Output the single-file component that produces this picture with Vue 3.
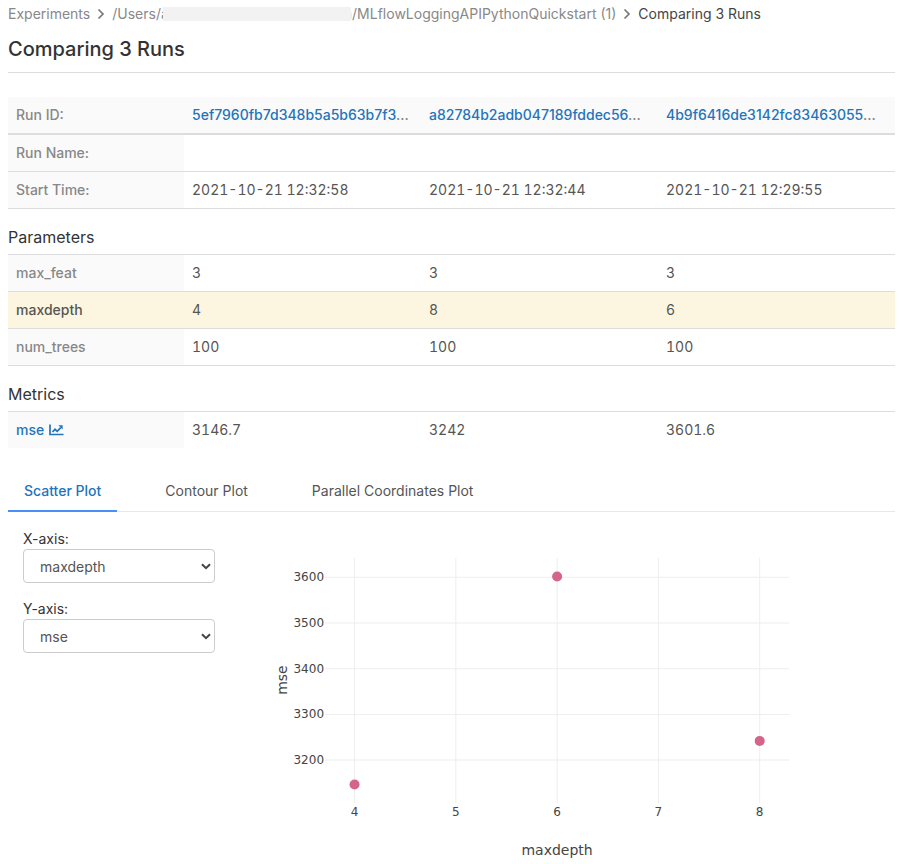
<script setup>
import { ref, computed } from 'vue'

const runs = [
  { id: '5ef7960fb7d348b5a5b63b7f3', start: '2021-10-21 12:32:58' },
  { id: 'a82784b2adb047189fddec56', start: '2021-10-21 12:32:44' },
  { id: '4b9f6416de3142fc83463055', start: '2021-10-21 12:29:55' }
]

const params = [
  { name: 'max_feat', values: [3, 3, 3] },
  { name: 'maxdepth', values: [4, 8, 6] },
  { name: 'num_trees', values: [100, 100, 100] }
]

const mse = [3146.7, 3242, 3601.6]

const differs = (row) => new Set(row.values).size > 1

const tabs = ['Scatter Plot', 'Contour Plot', 'Parallel Coordinates Plot']
const activeTab = ref(tabs[0])

const xAxis = ref('maxdepth')
const yAxis = ref('mse')

// Data space to drawing space
const scaleX = (v) => 109.5 + (v - 4) * 101.25
const scaleY = (v) => 236 - (v - 3200) * 0.4568

const xTicks = [4, 5, 6, 7, 8]
const yTicks = [3200, 3300, 3400, 3500, 3600]

const points = computed(() =>
  params[1].values.map((depth, i) => ({ x: scaleX(depth), y: scaleY(mse[i]) }))
)
</script>

<template>
  <main class="page">
    <nav class="breadcrumb" aria-label="Breadcrumb">
      <a href="#">Experiments</a>
      <svg class="chevron" viewBox="0 0 8 12"><path d="M1.5 1.5 6 6 1.5 10.5" /></svg>
      <a href="#" class="path"><span>/Users/a</span><span class="redacted"></span><span>m/MLflowLoggingAPIPythonQuickstart (1)</span></a>
      <svg class="chevron" viewBox="0 0 8 12"><path d="M1.5 1.5 6 6 1.5 10.5" /></svg>
      <span class="current">Comparing 3 Runs</span>
    </nav>

    <h1>Comparing 3 Runs</h1>

    <table class="runs">
      <thead>
        <tr>
          <th scope="row" class="label">Run ID:</th>
          <th v-for="run in runs" :key="run.id" scope="col"><a href="#">{{ run.id }}</a>...</th>
        </tr>
      </thead>
      <tbody>
        <tr>
          <th scope="row" class="label">Run Name:</th>
          <td v-for="run in runs" :key="run.id"></td>
        </tr>
        <tr>
          <th scope="row" class="label">Start Time:</th>
          <td v-for="run in runs" :key="run.id">{{ run.start }}</td>
        </tr>
      </tbody>
    </table>

    <h2>Parameters</h2>
    <table class="params">
      <tbody>
        <tr v-for="row in params" :key="row.name" :class="{ diff: differs(row) }">
          <th scope="row" class="label">{{ row.name }}</th>
          <td v-for="(value, i) in row.values" :key="i">{{ value }}</td>
        </tr>
      </tbody>
    </table>

    <h2>Metrics</h2>
    <table class="metrics">
      <tbody>
        <tr>
          <th scope="row" class="label">
            <a href="#" class="metric">mse
              <svg class="chart-icon" viewBox="0 0 15 12">
                <path class="axes" d="M1 0.5V10.5H14.5" />
                <path class="trend" d="M3.5 8 6 5.3 8.2 7.3 11.7 3.6" />
                <path class="tip" d="M9.4 1.2H13.6V5.4Z" />
              </svg>
            </a>
          </th>
          <td v-for="value in mse" :key="value">{{ value }}</td>
        </tr>
      </tbody>
    </table>

    <div class="tabs" role="tablist">
      <button
        v-for="tab in tabs"
        :key="tab"
        type="button"
        role="tab"
        :aria-selected="tab === activeTab"
        :class="{ active: tab === activeTab }"
        @click="activeTab = tab"
      >{{ tab }}</button>
    </div>

    <section class="panel">
      <form class="controls">
        <label for="x-axis">X-axis:</label>
        <div class="picker">
          <select id="x-axis" v-model="xAxis">
            <option>max_feat</option>
            <option>maxdepth</option>
            <option>num_trees</option>
            <option>mse</option>
          </select>
          <svg viewBox="0 0 10 7"><path d="M1 1.2 5 5.2 9 1.2" /></svg>
        </div>
        <label for="y-axis">Y-axis:</label>
        <div class="picker">
          <select id="y-axis" v-model="yAxis">
            <option>max_feat</option>
            <option>maxdepth</option>
            <option>num_trees</option>
            <option>mse</option>
          </select>
          <svg viewBox="0 0 10 7"><path d="M1 1.2 5 5.2 9 1.2" /></svg>
        </div>
      </form>

      <svg class="plot" viewBox="0 0 635 336">
        <g class="grid">
          <line v-for="t in xTicks" :key="t" :x1="scaleX(t)" :x2="scaleX(t)" y1="34" y2="279" />
          <line v-for="t in yTicks" :key="t" x1="80" x2="544" :y1="scaleY(t)" :y2="scaleY(t)" />
        </g>
        <g class="ticks">
          <text v-for="t in xTicks" :key="t" :x="scaleX(t)" y="292" text-anchor="middle">{{ t }}</text>
          <text v-for="t in yTicks" :key="t" x="79" :y="scaleY(t) + 4" text-anchor="end">{{ t }}</text>
        </g>
        <g class="points">
          <circle v-for="(p, i) in points" :key="i" :cx="p.x" :cy="p.y" r="5" />
        </g>
        <g class="titles">
          <text x="312" y="331" text-anchor="middle">{{ xAxis }}</text>
          <text transform="translate(42 156) rotate(-90)" text-anchor="middle">{{ yAxis }}</text>
        </g>
      </svg>
    </section>
  </main>
</template>

<style>
body {
  margin: 0;
  background: #fff;
}
</style>

<style scoped>
.page {
  box-sizing: border-box;
  padding: 4px 4px 0 8px;
  color: #333;
  font: 14px/20px Inter, "Liberation Sans", sans-serif;
}

a {
  color: #2374bb;
  text-decoration: none;
}

.breadcrumb {
  display: flex;
  align-items: center;
  gap: 7px;
  white-space: nowrap;
}

.breadcrumb a {
  color: #888;
}

.breadcrumb .path {
  display: flex;
  align-items: center;
}

.redacted {
  position: relative;
  width: 188px;
  height: 14px;
  margin: 0 -11px 0 -6px;
  background: #f2f2f2;
}

.current {
  color: #444;
}

.chevron {
  width: 8px;
  height: 12px;
  fill: none;
  stroke: #777;
  stroke-width: 1.7;
}

h1 {
  margin: 8px 0 24px;
  padding: 5px 0 10px;
  border-bottom: 1px solid #ddd;
  font-size: 20px;
  line-height: 25px;
  font-weight: 500;
}

h2 {
  margin: 16px 0 4px;
  font-size: 16px;
  line-height: 25px;
  font-weight: 400;
}

table {
  width: 100%;
  table-layout: fixed;
  border-collapse: separate;
  border-spacing: 0;
}

th,
td {
  box-sizing: border-box;
  padding: 8px;
  height: 37px;
  text-align: left;
  color: #555;
  white-space: nowrap;
}

td {
  font-variant-numeric: tabular-nums;
}

th {
  background: #fafafa;
  color: #888;
  font-weight: 500;
}

.label {
  width: 176px;
}

.runs thead th {
  height: 38px;
  border-bottom: 2px solid #ddd;
}

.runs td,
.runs tbody th,
.params td,
.params th {
  border-bottom: 1px solid #ddd;
}

.params tr:first-child > *,
.metrics tr:first-child > * {
  border-top: 1px solid #ddd;
}

.params tr:first-child > * {
  height: 38px;
}

.diff > * {
  background: #fcf5df;
  color: #555;
}

.metric {
  display: flex;
  align-items: center;
  gap: 5px;
}

.chart-icon {
  width: 15px;
  height: 12px;
  fill: none;
  stroke: #2374bb;
  stroke-width: 1.7;
}

.chart-icon .tip {
  fill: #2374bb;
  stroke: none;
}

.tabs {
  display: flex;
  gap: 32px;
  margin: 21px 0 16px;
  border-bottom: 1px solid #e8e8e8;
}

.tabs button {
  margin: 0 0 -1px;
  padding: 12px 16px 9px;
  border: 0;
  border-bottom: 2px solid transparent;
  background: none;
  color: #555;
  font: inherit;
}

.tabs .active {
  border-color: #4890f7;
  color: #2374bb;
  font-weight: 500;
}

.panel {
  display: grid;
  grid-template-columns: 1fr 3fr;
}

.controls {
  padding: 0 15px;
}

.controls label {
  display: block;
  padding-top: 1px;
}

.picker {
  position: relative;
  margin-bottom: 15px;
}

.picker select {
  appearance: none;
  display: block;
  box-sizing: border-box;
  width: 100%;
  height: 34px;
  padding: 1px 16px 0;
  border: 1px solid #ccc;
  border-radius: 4px;
  background: #fff;
  color: #555;
  font: inherit;
}

.picker svg {
  position: absolute;
  top: 14px;
  right: 4px;
  width: 10px;
  height: 7px;
  fill: none;
  stroke: #444;
  stroke-width: 2;
  pointer-events: none;
}

.plot {
  display: block;
  box-sizing: border-box;
  width: 100%;
  padding: 0 15px;
  margin-top: -4px;
  fill: #444;
}

.grid line {
  stroke: #eee;
  stroke-width: 1;
}

.ticks {
  font: 12px "DejaVu Sans", sans-serif;
}

.titles {
  font: 14px "DejaVu Sans", sans-serif;
}

.points {
  fill: #d4648a;
}
</style>
